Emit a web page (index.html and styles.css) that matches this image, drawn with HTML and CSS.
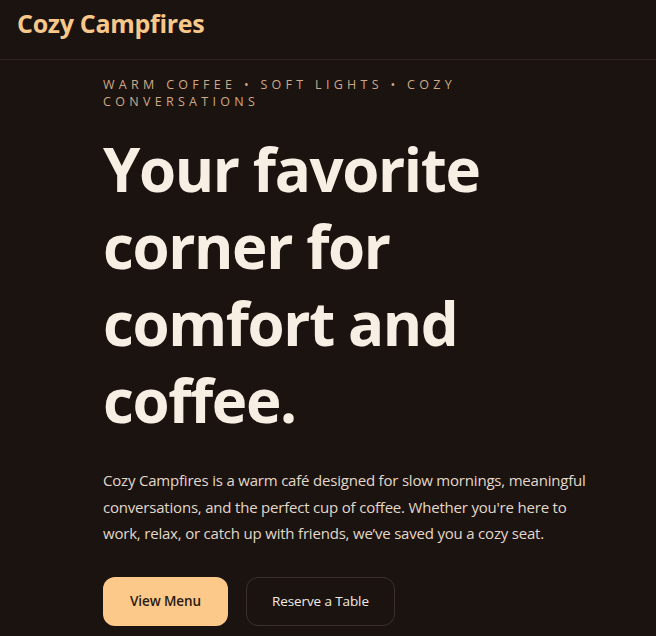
FILE: index.html
```html
<!DOCTYPE html>
<html lang="en">
<head>
<meta charset="utf-8">
<title>Cozy Campfires</title>
<link rel="stylesheet" href="styles.css">
</head>
<body>
<header class="site-header">
  <div class="brand">Cozy Campfires</div>
</header>
<main class="hero">
  <p class="eyebrow">Warm coffee • Soft lights • Cozy conversations</p>
  <h1 class="title">Your favorite corner for comfort and coffee.</h1>
  <p class="lead">Cozy Campfires is a warm café designed for slow mornings, meaningful conversations, and the perfect cup of coffee. Whether you're here to work, relax, or catch up with friends, we’ve saved you a cozy seat.</p>
  <div class="actions">
    <a class="btn btn-primary" href="#">View Menu</a>
    <a class="btn btn-ghost" href="#">Reserve a Table</a>
  </div>
</main>
</body>
</html>
```

FILE: styles.css
```css
* { box-sizing: border-box; }
html, body { margin: 0; padding: 0; }
body {
  background: #1a1310;
  color: #f5eee4;
  font-family: "Open Sans", "Noto Sans", sans-serif;
  min-height: 636px;
}
.site-header {
  height: 60px;
  border-bottom: 1px solid #2e2520;
  padding: 0 17px;
  display: flex;
  align-items: center;
}
.brand {
  font-size: 25px;
  font-weight: 700;
  color: #f8c88b;
  letter-spacing: -0.3px;
  margin-top: -13px;
}
.hero {
  padding: 16px 0 0 103px;
  width: 620px;
}
.eyebrow {
  margin: 0;
  text-transform: uppercase;
  font-size: 12.5px;
  line-height: 17px;
  letter-spacing: 4.3px;
  color: #cfa987;
  max-width: 500px;
}
.title {
  margin: 21px 0 0;
  font-size: 60px;
  line-height: 77px;
  font-weight: 700;
  letter-spacing: -1.4px;
  color: #f7efe3;
}
.lead {
  margin: 28px 0 0;
  font-size: 15px;
  line-height: 26.5px;
  letter-spacing: -0.2px;
  color: #e3d8c9;
  max-width: 500px;
}
.actions {
  margin-top: 30px;
  display: flex;
  gap: 18px;
}
.btn {
  display: inline-flex;
  align-items: center;
  justify-content: center;
  height: 49px;
  border-radius: 12px;
  font-size: 13.5px;
  letter-spacing: -0.1px;
  text-decoration: none;
}
.btn-primary {
  padding: 0 27px;
  background: #fdc98a;
  color: #2a1a10;
  font-weight: 600;
}
.btn-ghost {
  padding: 0 25px;
  border: 1px solid #3b322d;
  color: #f3ece2;
  font-weight: 500;
}
```
